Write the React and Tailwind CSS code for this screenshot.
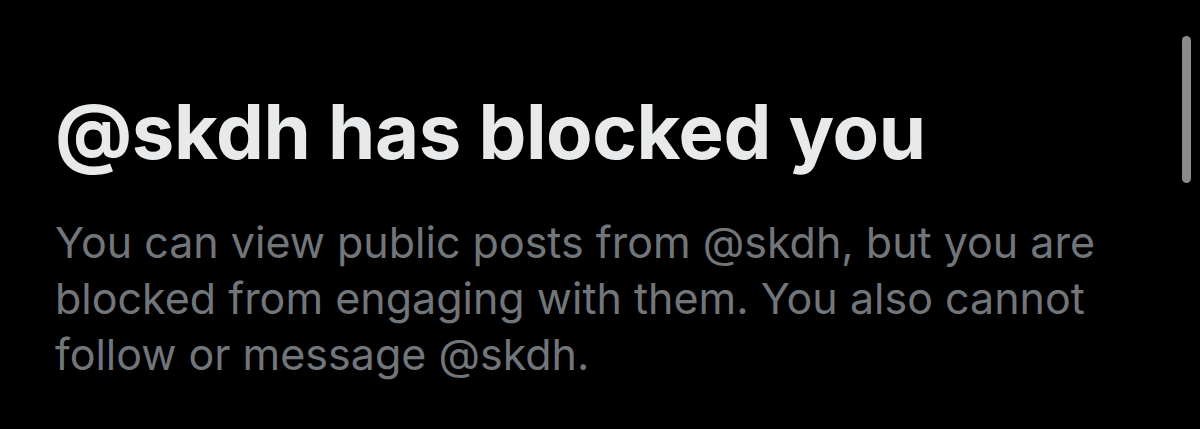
import React from 'react';

export default function App() {
  return (
    <div className="relative h-[429px] w-[1200px] overflow-hidden bg-black" style={{ fontFamily: 'Inter, "Noto Sans", sans-serif' }}>
      <div className="pl-[55px] pr-[80px] pt-[86px]">
        <h1 className="text-[76px] font-bold leading-[90px] tracking-[-0.4px] text-[#e7e9ea]">
          @skdh has blocked you
        </h1>
        <p className="mt-[38px] text-[43px] leading-[56px] text-[#71767b]">
          You can view public posts from @skdh, but you are blocked from engaging with them. You also cannot follow or message @skdh.
        </p>
      </div>
      {/* scroll indicator */}
      <div className="absolute left-[1182px] top-[36px] h-[147px] w-[9px] rounded-full bg-[#8a8a8a]" />
    </div>
  );
}
